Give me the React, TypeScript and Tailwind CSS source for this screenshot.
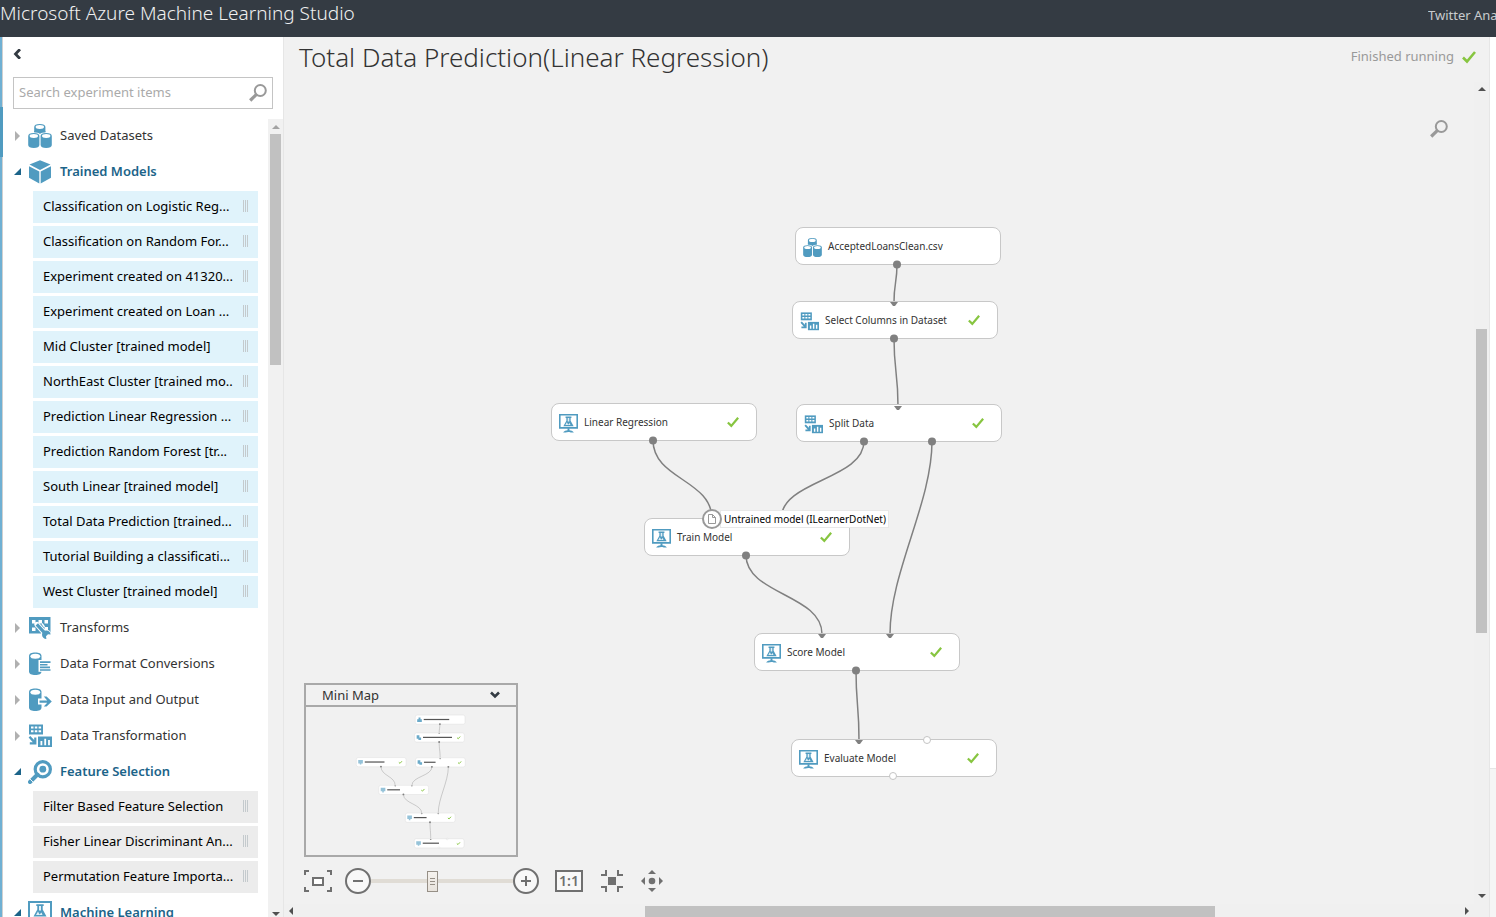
import React from "react";

type IconName =
  | "datasets"
  | "cube"
  | "transforms"
  | "format"
  | "io"
  | "transformation"
  | "feature"
  | "learning";

function Cylinder({ x, y }: { x: number; y: number }) {
  return (
    <g transform={`translate(${x} ${y})`}>
      <path d="M0 3C0 1 2 0 5.600 0S11.200 1 11.200 3V12C11.200 14 9 15 5.600 15S0 14 0 12Z" fill="#509bc0" />
      <ellipse cx="5.600" cy="3" rx="4.200" ry="1.900" fill="#fff" />
    </g>
  );
}

function Icon({ name, className }: { name: IconName; className: string }) {
  return (
    <svg viewBox="0 0 24 24" className={className} fill="#509bc0" aria-hidden="true">
      {name === "datasets" && (
        <>
          <Cylinder x={6.2} y={0} />
          <path d="M-.5 8.200H24V24H-.5Z" fill="#fff" />
          <path d="M6.200 7H17.400V8.200C15 8.300 13 9 12 10C11 9 9 8.300 6.200 8.200Z" />
          <Cylinder x={0.2} y={9} />
          <Cylinder x={12.6} y={9} />
        </>
      )}
      {name === "cube" && (
        <>
          <path d="M12 .3L22.500 4.500L12 9.900L1.500 4.500Z" />
          <path d="M1 6.200L11.300 11.600V23.500L1 17.800Z" />
          <path d="M23 6.200L12.700 11.600V23.500L23 17.800Z" />
        </>
      )}
      {name === "transforms" && (
        <>
          <path d="M1 1H22.500V17.500H1Z" />
          <path
            d="M4 4h3.500v3.500H4zM10.500 4H14v3.500h-3.500zM16.500 4H20v3.500h-3.500zM4 11.500h3.500V15H4zM16.500 11H20v3.500h-3.500z"
            fill="#fff"
          />
          <path d="M7 7L10 10M14 7.500L16.500 11" stroke="#fff" strokeWidth="1.400" />
          <path d="M9 8.500L17 17.500" stroke="#fff" strokeWidth="5.200" strokeLinecap="round" />
          <circle cx="18.200" cy="18.800" r="5.200" fill="#fff" />
          <path d="M8.800 8.300L17.500 17.800" stroke="#509bc0" strokeWidth="3.200" />
          <path d="M22.600 18.500A4.300 4.300 0 1 0 18.400 23L18 20.200L20 18.300Z" />
        </>
      )}
      {(name === "format" || name === "io") && (
        <>
          <path d="M1 4C1 1.500 3.500 .5 7.300 .5S13.500 1.500 13.500 4V19.500C13.500 22 11 23 7.300 23S1 22 1 19.500Z" />
          <ellipse cx="7.300" cy="4.200" rx="4.900" ry="2.500" fill="#fff" />
        </>
      )}
      {name === "format" && (
        <>
          <path d="M10.500 8H24V19.800H10.500Z" fill="#fff" />
          <path d="M12 9.200h10.500v1.700H12zM12 11.900h7.500v1.700H12zM12 14.600h10v1.700H12zM12 17.200h10.500v1.600H12z" />
        </>
      )}
      {name === "io" && (
        <>
          <path d="M10 10.500H16L14.500 7H18.500L24 13.600L18.500 20.500H14.500L16 16.500H10Z" fill="#fff" />
          <path d="M11.500 12.400H19.200L15.800 8.600H18.600L23.800 13.600L18.600 18.600H15.800L19.200 14.800H11.500Z" />
        </>
      )}
      {name === "transformation" && (
        <>
          <path d="M1 .5H15V10.500H1Z" />
          <path
            d="M3 2.500h2.500v2H3zM6.800 2.500h2.500v2H6.800zM10.600 2.500h2.500v2h-2.500zM3 6.300h2.500v2H3zM6.800 6.300h2.500v2H6.800zM10.600 6.300h2.500v2h-2.500z"
            fill="#fff"
          />
          <path d="M10 12.500H24V23H10Z" />
          <path d="M12.500 17h1.800v4.300h-1.800zM16.300 14.800h1.800v6.500h-1.800zM20.100 16h1.800v5.300h-1.800z" fill="#fff" />
          <path d="M.6 13.500L2.300 12L6.200 16V13.500H8.400V20.500H1.800V18.300H4.800Z" />
        </>
      )}
      {name === "feature" && (
        <>
          <circle cx="14.800" cy="9.200" r="7.600" fill="none" stroke="#509bc0" strokeWidth="3.200" />
          <circle cx="14.800" cy="9.200" r="3.400" />
          <path d="M9.500 14.500L2 22" stroke="#509bc0" strokeWidth="4" strokeLinecap="round" />
          <path d="M1.800 18.800L5.200 22.200" stroke="#fff" strokeWidth=".9" />
        </>
      )}
      {name === "learning" && (
        <>
          <path d="M1 1H23V17.500H1Z" fill="none" stroke="#509bc0" strokeWidth="2" />
          <path d="M8.300 3.200H15.700V5H14.700V8.500L18.500 15.500H5.500L9.300 8.500V5H8.300Z" />
          <path d="M11 5H13V9.500H11ZM8 14L10 10.500L11.500 13.500L13.500 11.500L14.500 14Z" fill="#fff" opacity=".85" />
          <path d="M10.800 18H13.200V20.500C15 20.500 17.500 21.300 18.800 23.500H15.500C14 22.300 10 22.300 8.500 23.500H5.200C6.500 21.300 9 20.500 10.800 20.500Z" />
        </>
      )}
    </svg>
  );
}

function Check({ className }: { className: string }) {
  return (
    <svg viewBox="0 0 14 14" className={className} fill="none" aria-hidden="true">
      <path d="M1 7.500L5 11.500L13 2" stroke="#87c540" strokeWidth="2.600" />
    </svg>
  );
}

function Magnifier({ className }: { className: string }) {
  return (
    <svg viewBox="0 0 18 18" className={className} fill="none" stroke="#999" aria-hidden="true">
      <circle cx="11.300" cy="6.500" r="5.500" strokeWidth="2" />
      <path d="M7.500 10.300L1.200 16.500" strokeWidth="3.200" />
    </svg>
  );
}

function Arrow({ dir, className }: { dir: "up" | "down" | "left" | "right"; className: string }) {
  const shapes = { up: "M0 6L4 2L8 6Z", down: "M0 2L4 6L8 2Z", left: "M6 0L2 4L6 8Z", right: "M2 0L6 4L2 8Z" };
  return (
    <svg viewBox="0 0 8 8" className={className} fill="currentColor" aria-hidden="true">
      <path d={shapes[dir]} />
    </svg>
  );
}

type Category = { label: string; icon: IconName; items?: string[]; tone?: "blue" | "gray" };

const categories: Category[] = [
  { label: "Saved Datasets", icon: "datasets" },
  {
    label: "Trained Models",
    icon: "cube",
    tone: "blue",
    items: [
      "Classification on Logistic Reg...",
      "Classification on Random For...",
      "Experiment created on 41320...",
      "Experiment created on Loan ...",
      "Mid Cluster [trained model]",
      "NorthEast Cluster [trained mo..",
      "Prediction Linear Regression ...",
      "Prediction Random Forest [tr...",
      "South Linear [trained model]",
      "Total Data Prediction [trained...",
      "Tutorial Building a classificati...",
      "West Cluster [trained model]",
    ],
  },
  { label: "Transforms", icon: "transforms" },
  { label: "Data Format Conversions", icon: "format" },
  { label: "Data Input and Output", icon: "io" },
  { label: "Data Transformation", icon: "transformation" },
  {
    label: "Feature Selection",
    icon: "feature",
    tone: "gray",
    items: ["Filter Based Feature Selection", "Fisher Linear Discriminant An...", "Permutation Feature Importa..."],
  },
  { label: "Machine Learning", icon: "learning", items: [] },
];

function CategoryGroup({ category }: { category: Category }) {
  const open = category.items !== undefined;
  return (
    <li>
      <button type="button" aria-expanded={open} className="flex h-9 w-full items-center pt-[2px] pl-[10px] text-left">
        <svg viewBox="0 0 8 10" className="h-[10px] w-2 shrink-0" aria-hidden="true">
          {open ? <path d="M8 1V8H1Z" fill="#1c6489" /> : <path d="M2 0L7 5L2 10Z" fill="#b0b0b0" />}
        </svg>
        <Icon name={category.icon} className="ml-[7px] h-6 w-6 shrink-0" />
        <span className={open ? "ml-2 text-[13px] font-semibold text-[#1c6489]" : "ml-2 text-[13px] text-[#333]"}>
          {category.label}
        </span>
      </button>
      {category.items && category.items.length > 0 && (
        <ul className="flex flex-col gap-[3px] pt-[2px] pr-[10px] pb-px pl-[30px]">
          {category.items.map((item) => (
            <li
              key={item}
              className={
                category.tone === "blue"
                  ? "flex h-8 items-center justify-between bg-[#e0f3fb] pr-[10px] pl-[10px]"
                  : "flex h-8 items-center justify-between bg-[#ececec] pr-[10px] pl-[10px]"
              }
            >
              <span className="text-[13px] whitespace-nowrap text-black">{item}</span>
              <span className="flex gap-px pb-[2px]">
                <span className="h-3 w-px bg-[#c4cacd]" />
                <span className="h-3 w-px bg-[#c4cacd]" />
                <span className="h-3 w-px bg-[#c4cacd]" />
              </span>
            </li>
          ))}
        </ul>
      )}
    </li>
  );
}

type GraphNode = { label: string; icon: IconName; x: number; y: number; done: boolean };

const nodes: GraphNode[] = [
  { label: "AcceptedLoansClean.csv", icon: "datasets", x: 511, y: 145, done: false },
  { label: "Select Columns in Dataset", icon: "transformation", x: 508, y: 219, done: true },
  { label: "Split Data", icon: "transformation", x: 512, y: 322, done: true },
  { label: "Linear Regression", icon: "learning", x: 267, y: 321, done: true },
  { label: "Train Model", icon: "learning", x: 360, y: 436, done: true },
  { label: "Score Model", icon: "learning", x: 470, y: 551, done: true },
  { label: "Evaluate Model", icon: "learning", x: 507, y: 657, done: true },
];

type Edge = { from: [number, number]; to: [number, number] };

const edges: Edge[] = [
  { from: [613, 182], to: [610, 220] },
  { from: [610, 256], to: [614, 324] },
  { from: [369, 358], to: [428, 437] },
  { from: [580, 359], to: [497, 437] },
  { from: [648, 359], to: [606, 552] },
  { from: [462, 473], to: [538, 552] },
  { from: [572, 588], to: [575, 658] },
];

function edgePath({ from, to }: Edge) {
  const reach = Math.min((to[1] - from[1]) / 2, 62);
  return `M${from[0]} ${from[1]}C${from[0]} ${from[1] + reach} ${to[0]} ${to[1] - reach} ${to[0]} ${to[1]}`;
}

function Connections() {
  return (
    <g>
      {edges.map((edge) => (
        <path key={edgePath(edge)} d={edgePath(edge)} fill="none" stroke="#808080" strokeWidth="1.500" />
      ))}
    </g>
  );
}

function Ports() {
  return (
    <g fill="#808080">
      {edges.map((edge) => (
        <g key={edgePath(edge)}>
          <circle cx={edge.from[0]} cy={edge.from[1] + 0.5} r="4" />
          <path d={`M${edge.to[0] - 4} ${edge.to[1]}h8l-3 4h-2z`} />
        </g>
      ))}
      <circle cx="643" cy="658" r="3.500" fill="#fff" stroke="#c4c4c4" />
      <circle cx="609" cy="694" r="3.500" fill="#fff" stroke="#c4c4c4" />
    </g>
  );
}

function MiniMap() {
  return (
    <section className="w-[214px] border-2 border-[#a9a9a9] bg-[#f1f1f1]">
      <button
        type="button"
        className="flex h-[22px] w-full items-center justify-between border-b-2 border-[#a9a9a9] pr-4 pl-4 text-[13px] text-[#333]"
      >
        <span className="pt-px">Mini Map</span>
        <svg viewBox="0 0 10 8" className="h-2 w-[10px]" fill="none" aria-hidden="true">
          <path d="M1 1.500L5 5.500L9 1.500" stroke="#333b43" strokeWidth="2.600" />
        </svg>
      </button>
      <svg viewBox="0 0 210 148" className="block h-[148px] w-full" aria-hidden="true">
        <g transform="translate(-14.200 -27) scale(.2416)">
          <Connections />
          {nodes.map((node) => (
            <g key={node.label} transform={`translate(${node.x} ${node.y})`}>
              <rect width="206" height="38" rx="8" fill="#fff" stroke="#ddd" strokeWidth="2" />
              <g transform="translate(8 10) scale(.8)">
                {node.icon === "datasets" && <path d="M7 0H17V9H24V24H0V9H7Z" fill="#509bc0" opacity=".85" />}
                {node.icon === "transformation" && <path d="M1 0H15V11H24V24H10V18H1Z" fill="#509bc0" opacity=".85" />}
                {node.icon === "learning" && <path d="M0 0H24V18H16V24H8V18H0Z" fill="#509bc0" opacity=".6" />}
              </g>
              <rect x="35" y="16" width={node.label.length * 4.8} height="5" fill="#555" />
              {node.done && <path d="M176 20l5 4l8-9" fill="none" stroke="#87c540" strokeWidth="4" />}
            </g>
          ))}
          <Ports />
        </g>
      </svg>
    </section>
  );
}

function Toolbar() {
  return (
    <div className="flex items-center text-[#707070]">
      <button type="button" aria-label="Zoom to fit">
        <svg viewBox="0 0 28 24" className="h-6 w-7" fill="none" stroke="currentColor" strokeWidth="2">
          <path d="M1 6V2H5M23 2H27V6M27 18V22H23M5 22H1V18" />
          <path d="M9 9H19V16H9Z" fill="#fff" />
        </svg>
      </button>
      <button type="button" aria-label="Zoom out" className="ml-[13px]">
        <svg viewBox="0 0 26 26" className="h-[26px] w-[26px]" fill="none" stroke="currentColor" strokeWidth="2">
          <circle cx="13" cy="13" r="12" fill="#f8f8f8" />
          <path d="M8 13H18" />
        </svg>
      </button>
      <input
        type="range"
        aria-label="Zoom"
        defaultValue={43}
        className="h-[21px] w-[142px] appearance-none bg-transparent [&::-webkit-slider-runnable-track]:h-1 [&::-webkit-slider-runnable-track]:bg-[#e0dcd5] [&::-webkit-slider-thumb]:-mt-[8px] [&::-webkit-slider-thumb]:h-[21px] [&::-webkit-slider-thumb]:w-[11px] [&::-webkit-slider-thumb]:appearance-none [&::-webkit-slider-thumb]:border [&::-webkit-slider-thumb]:border-[#968f86] [&::-webkit-slider-thumb]:bg-[linear-gradient(#968f86,#968f86),linear-gradient(#968f86,#968f86),linear-gradient(#968f86,#968f86),linear-gradient(#f5f2ee,#e8e3dc)] [&::-webkit-slider-thumb]:bg-[size:5px_1px,5px_1px,5px_1px,100%_100%] [&::-webkit-slider-thumb]:bg-[position:2px_6px,2px_9px,2px_12px,0_0] [&::-webkit-slider-thumb]:bg-no-repeat"
      />
      <button type="button" aria-label="Zoom in">
        <svg viewBox="0 0 26 26" className="h-[26px] w-[26px]" fill="none" stroke="currentColor" strokeWidth="2">
          <circle cx="13" cy="13" r="12" fill="#f8f8f8" />
          <path d="M8 13H18M13 8V18" />
        </svg>
      </button>
      <button
        type="button"
        className="ml-4 flex h-[22px] w-7 items-center justify-center border-2 border-[#707070] bg-[#f8f8f8] text-[14px] leading-4 font-semibold"
      >
        1:1
      </button>
      <button type="button" aria-label="Collapse" className="ml-[18px]">
        <svg viewBox="0 0 22 22" className="h-[22px] w-[22px]" fill="none" stroke="currentColor" strokeWidth="2">
          <path d="M0 5H5V0M17 0V5H22M22 17H17V22M5 22V17H0" />
          <path d="M7 7H15V15H7Z" fill="currentColor" stroke="none" />
        </svg>
      </button>
      <button type="button" aria-label="Pan" className="ml-[18px]">
        <svg viewBox="0 0 22 22" className="h-[22px] w-[22px]" fill="currentColor">
          <circle cx="11" cy="11" r="3.300" />
          <path d="M11 0L15 4H7ZM11 22L15 18H7ZM0 11L4 7V15ZM22 11L18 7V15Z" />
        </svg>
      </button>
    </div>
  );
}

function Canvas() {
  return (
    <div className="relative min-w-0 flex-1 overflow-hidden">
      <svg className="absolute top-0 left-0 h-full w-full" aria-hidden="true">
        <Connections />
      </svg>
      {nodes.map((node) => (
        <div
          key={node.label}
          className="absolute flex h-[38px] w-[206px] items-center rounded-lg border border-[#c8c8c8] bg-white pr-[17px] pl-[7px]"
          style={{ left: node.x, top: node.y }}
        >
          <Icon name={node.icon} className="mt-[3px] h-[19px] w-[19px] shrink-0" />
          <span className="ml-[6px] flex-1 text-[10px] leading-4 whitespace-nowrap text-[#333]">{node.label}</span>
          {node.done && <Check className="h-3 w-3" />}
        </div>
      ))}
      <svg className="absolute top-0 left-0 h-full w-full" aria-hidden="true">
        <Ports />
      </svg>
      <div className="absolute top-[427px] left-[418px] flex items-center">
        <span className="z-10 flex h-5 w-5 items-center justify-center rounded-full border-2 border-[#999] bg-white">
          <svg viewBox="0 0 8 10" className="h-[10px] w-2" fill="none" stroke="#999" aria-hidden="true">
            <path d="M.5 .5H4.500L7.500 3.500V9.500H.5ZM4.500 .5V3.500H7.500" />
          </svg>
        </span>
        <span className="-ml-[2px] border border-[#e8e8e8] bg-white pr-[2px] pl-[3px] text-[10px] leading-4 whitespace-nowrap text-black">
          Untrained model (ILearnerDotNet)
        </span>
      </div>
      <button type="button" aria-label="Search canvas" className="absolute top-[38px] right-[26px]">
        <Magnifier className="h-[18px] w-[18px]" />
      </button>
      <div className="absolute bottom-[10px] left-5 flex flex-col gap-[11px]">
        <MiniMap />
        <Toolbar />
      </div>
    </div>
  );
}

export default function App() {
  return (
    <div className="flex h-screen flex-col overflow-hidden bg-[#f1f1f1] font-['Noto_Sans','Open_Sans',sans-serif]">
      <header className="flex h-[37px] shrink-0 justify-between bg-[#343b43] whitespace-nowrap">
        <span className="text-[19px] leading-[26px] font-light text-[#f0f0f0]">
          Microsoft Azure Machine Learning Studio
        </span>
        <span className="w-[68px] overflow-hidden pt-[5px] text-[13px] leading-5 text-[#c8cbce]">Twitter Ana</span>
      </header>
      <div className="flex min-h-0 flex-1">
        <aside className="flex w-[284px] shrink-0 border-r border-[#e6e6e6] bg-white">
          <div className="w-[3px] shrink-0 border-r border-[#d0d0d0] bg-[#6fb0d3] pt-[70px]">
            <div className="h-[50px] w-[3px] bg-[#509bc0]" />
          </div>
          <div className="flex min-w-0 flex-1 flex-col">
            <button type="button" aria-label="Collapse panel" className="mt-3 ml-[10px] h-[10px] w-2">
              <svg viewBox="0 0 8 10" className="h-[10px] w-2" fill="none">
                <path d="M7 .2L2.500 5L7 9.800" stroke="#343b43" strokeWidth="2.800" />
              </svg>
            </button>
            <label className="mt-[18px] mr-[10px] ml-[10px] flex h-8 shrink-0 items-center border border-[#c4c4c4] pr-[5px] pl-[5px]">
              <input
                type="text"
                aria-label="Search experiment items"
                placeholder="Search experiment items"
                className="min-w-0 flex-1 text-[13px] outline-none placeholder:text-[#aaa]"
              />
              <Magnifier className="h-[18px] w-[18px]" />
            </label>
            <div className="mt-2 flex min-h-0 flex-1">
              <nav className="min-w-0 flex-1 overflow-hidden">
                <ul>
                  {categories.map((category) => (
                    <CategoryGroup key={category.label} category={category} />
                  ))}
                </ul>
              </nav>
              <div className="mt-[2px] flex w-[15px] shrink-0 flex-col items-center bg-[#f1f1f1]">
                <Arrow dir="up" className="mt-1 h-2 w-2 text-[#a3a3a3]" />
                <div className="mt-[3px] h-[231px] w-[11px] bg-[#c1c1c1]" />
                <Arrow dir="down" className="mt-auto -mb-px h-2 w-2 text-[#505050]" />
              </div>
            </div>
          </div>
        </aside>
        <main className="flex min-w-0 flex-1 flex-col">
          <div className="flex h-[45px] shrink-0 items-center justify-between pr-[13px] pb-[5px] pl-[15px]">
            <h1 className="text-[26px] leading-8 font-light whitespace-nowrap text-[#333]">
              Total Data Prediction(Linear Regression)
            </h1>
            <span className="flex items-center gap-2 text-[13px] whitespace-nowrap text-[#999]">
              Finished running
              <Check className="h-[14px] w-[14px]" />
            </span>
          </div>
          <div className="flex min-h-0 flex-1">
            <Canvas />
            <div className="flex w-[15px] shrink-0 flex-col items-center bg-[#f0f0f0]">
              <Arrow dir="up" className="mt-[3px] h-2 w-2 text-[#505050]" />
              <div className="mt-[236px] mr-px h-[304px] w-[11px] bg-[#c1c1c1]" />
              <Arrow dir="down" className="mt-auto mb-1 h-2 w-2 text-[#505050]" />
            </div>
          </div>
          <div className="flex h-[13px] shrink-0 items-center bg-[#f0f0f0] text-[#505050]">
            <Arrow dir="left" className="ml-[3px] h-2 w-2 shrink-0" />
            <div className="mt-[2px] ml-[350px] h-[11px] w-[570px] bg-[#c1c1c1]" />
            <Arrow dir="right" className="mr-[18px] ml-auto h-2 w-2 shrink-0" />
          </div>
        </main>
        <div className="flex w-[7px] shrink-0 flex-col border-l border-[#e6e6e6] bg-[#f5f5f5]">
          <div className="h-[732px] border-b border-[#e6e6e6] bg-white" />
        </div>
      </div>
    </div>
  );
}
